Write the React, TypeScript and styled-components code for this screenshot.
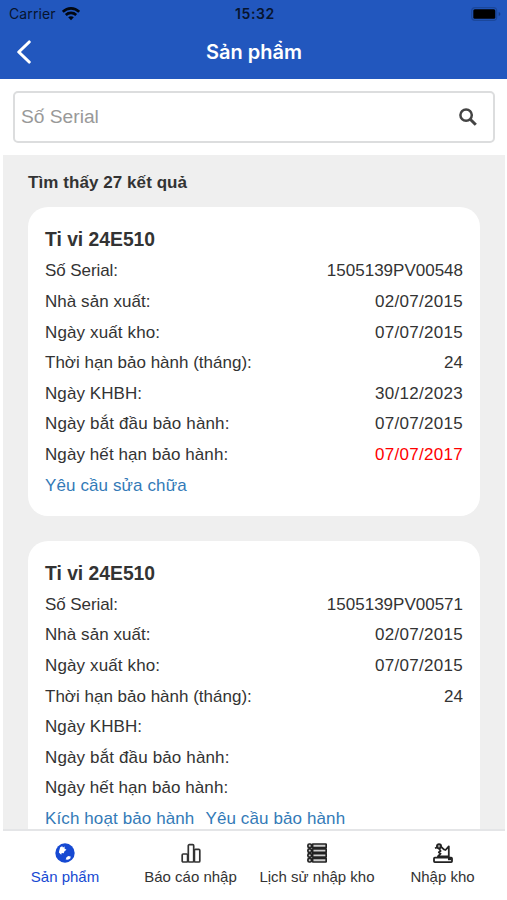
import React from "react";
import styled, { createGlobalStyle } from "styled-components";

const GlobalStyle = createGlobalStyle`
  * { box-sizing: border-box; }
  body {
    margin: 0;
    background: #fff;
    color: #333;
    font-family: "Liberation Sans", Arial, sans-serif;
  }
`;

const Screen = styled.div`
  width: 507px;
  height: 900px;
  display: flex;
  flex-direction: column;
  overflow: hidden;
  background: #fff;
`;

const Header = styled.header`
  height: 79px;
  flex: none;
  background: #2257be;
  font-family: Inter, sans-serif;
`;

const StatusBar = styled.div`
  height: 27px;
  display: grid;
  grid-template-columns: 1fr auto 1fr;
  align-items: center;
  padding: 0 6px 0 9px;
  color: #07142e;
`;

const Carrier = styled.div`
  display: flex;
  align-items: center;
  gap: 6px;
  font-size: 14px;
  letter-spacing: 0.1px;
`;

const Clock = styled.div`
  font-size: 14px;
  font-weight: 600;
  letter-spacing: 0.6px;
`;

const BatterySlot = styled.div`
  display: flex;
  justify-content: flex-end;
`;

const NavBar = styled.div`
  height: 50px;
  display: grid;
  grid-template-columns: 48px 1fr 48px;
  align-items: center;
`;

const BackButton = styled.button`
  display: flex;
  border: 0;
  padding: 0 0 0 16px;
  background: none;
`;

const NavTitle = styled.h1`
  margin: 0;
  padding-left: 1px;
  text-align: center;
  color: #fff;
  font-size: 20px;
  line-height: 50px;
  font-weight: 600;
`;

const SearchArea = styled.div`
  flex: none;
  height: 76px;
  padding: 12px 12px 0 13px;
`;

const SearchBox = styled.label`
  height: 51.5px;
  display: flex;
  align-items: center;
  justify-content: space-between;
  padding: 0 16px 0 6px;
  border: 2px solid #dcddde;
  border-radius: 5px;
`;

const SearchInput = styled.input`
  flex: 1;
  border: 0;
  padding: 0;
  outline: 0;
  background: none;
  font: 19.2px "Liberation Sans", Arial, sans-serif;
  &::placeholder { color: #999; opacity: 1; }
`;

const Results = styled.main`
  flex: 1;
  min-height: 0;
  overflow: hidden;
  margin: 0 2px 0 3px;
  padding: 12px 25px 0;
  background: #efefef;
`;

const ResultCount = styled.div`
  height: 40px;
  line-height: 31px;
  font-size: 17px;
  font-weight: 700;
  letter-spacing: 0.07px;
`;

const Card = styled.section`
  height: 309px;
  margin-bottom: 24.5px;
  padding: 17px 17px 0;
  border-radius: 20px;
  background: #fff;
`;

const CardTitle = styled.h2`
  margin: 0 0 1.4px;
  font-size: 19.3px;
  line-height: 31px;
  font-weight: 700;
`;

const Row = styled.div`
  display: flex;
  justify-content: space-between;
  font-size: 17px;
  line-height: 30.6px;
`;

const Label = styled.span<{ $spacing: number }>`
  letter-spacing: ${(p) => p.$spacing}px;
`;

const Value = styled.span<{ $date?: boolean; $expired?: boolean }>`
  letter-spacing: ${(p) => (p.$date ? "0.3px" : "0")};
  color: ${(p) => (p.$expired ? "#ff0000" : "inherit")};
`;

const Actions = styled.div`
  display: flex;
  gap: 11px;
  font-size: 17px;
  line-height: 30.6px;
`;

const Action = styled.a`
  color: #337ab7;
  letter-spacing: 0.11px;
`;

const TabBar = styled.nav`
  flex: none;
  height: 71px;
  margin: 0 2px 0 3px;
  display: grid;
  grid-template-columns: 124px 127px 126px 1fr;
  border-top: 2px solid #e4e5e7;
`;

const Tab = styled.a<{ $active?: boolean }>`
  display: flex;
  flex-direction: column;
  align-items: center;
  padding-top: 12px;
  gap: 3px;
  white-space: nowrap;
  font-size: 15px;
  line-height: 22px;
  color: ${(p) => (p.$active ? "#1649d2" : "#333")};
  svg { flex: none; }
`;

const fields = [
  { label: "Số Serial:", spacing: -0.08 },
  { label: "Nhà sản xuất:", spacing: 0.05 },
  { label: "Ngày xuất kho:", spacing: 0.13 },
  { label: "Thời hạn bảo hành (tháng):", spacing: 0 },
  { label: "Ngày KHBH:", spacing: 0.08 },
  { label: "Ngày bắt đầu bảo hành:", spacing: 0.14 },
  { label: "Ngày hết hạn bảo hành:", spacing: 0.08 },
];

const products = [
  {
    name: "Ti vi 24E510",
    values: ["1505139PV00548", "02/07/2015", "07/07/2015", "24", "30/12/2023", "07/07/2015", "07/07/2017"],
    expired: true,
    actions: ["Yêu cầu sửa chữa"],
  },
  {
    name: "Ti vi 24E510",
    values: ["1505139PV00571", "02/07/2015", "07/07/2015", "24"],
    expired: false,
    actions: ["Kích hoạt bảo hành", "Yêu cầu bảo hành"],
  },
];

const WifiIcon = () => (
  <svg width="18" height="14" viewBox="0 0 18 14" fill="none" stroke="#020711" strokeWidth="2.6">
    <path d="M.8 4.9C5.4.2 12.6.2 17.2 4.9" />
    <path d="M3.8 8c2.9-2.8 7.5-2.8 10.4 0" />
    <path d="M6.2 10.3c1.6-1.4 4-1.4 5.6 0L9 13.2z" fill="#020711" stroke="none" />
  </svg>
);

const BatteryIcon = () => (
  <svg width="30" height="14" viewBox="0 0 30 14">
    <rect x=".7" y=".7" width="25" height="12.6" rx="3.4" fill="none" stroke="#1b479b" strokeWidth="1.2" />
    <rect x="2.3" y="2.3" width="22" height="9.4" rx="1.5" fill="#000" />
    <path d="M27.7 5v4q1.7-.5 1.7-2t-1.7-2" fill="#173d87" />
  </svg>
);

const BackIcon = () => (
  <svg width="16" height="24" viewBox="0 0 16 24" fill="none" stroke="#fff" strokeWidth="3.1" strokeLinecap="round" strokeLinejoin="round">
    <path d="M13.2 2 2.8 12l10.4 10" />
  </svg>
);

const SearchIcon = () => (
  <svg width="18" height="18" viewBox="0 0 18 18" fill="none" stroke="#444" strokeWidth="2.5">
    <circle cx="7.1" cy="7.1" r="5.7" />
    <path d="m11.2 11.2 5.6 5.6" strokeWidth="3" />
  </svg>
);

const GlobeIcon = () => (
  <svg width="20" height="20" viewBox="0 0 20 20">
    <circle cx="10" cy="10" r="9.7" fill="#1649d2" />
    <path d="m5.2 4.2 2-1 .8 1.2 1.7-.8-.2 2 2 1.2-2 1.5-.8 2-2-.4-.5 1.8-2.3-2.1.4-2z" fill="#fff" />
    <path d="m11.5 14.2 1.8-1.1 2.4.4-.4 2-2.3 1.2-2.3-.3z" fill="#fff" />
  </svg>
);

const ChartIcon = () => (
  <svg width="20" height="20" viewBox="0 0 20 20" fill="#fff" stroke="#333" strokeWidth="1.7">
    <rect x="1.2" y="11" width="5.4" height="8" rx="1" />
    <rect x="7.3" y="1.7" width="5.4" height="17.3" rx="1" />
    <rect x="13.4" y="6.4" width="5.4" height="12.6" rx="1" />
  </svg>
);

const ListIcon = () => (
  <svg width="20" height="20" viewBox="0 0 20 20" fill="#ccc" stroke="#222" strokeWidth="1.7">
    {[1, 5.8, 10.6, 15.4].map((y) => (
      <React.Fragment key={y}>
        <rect x=".9" y={y} width="3.6" height="3.6" rx="1.4" />
        <rect x="5.6" y={y} width="13.6" height="3.6" rx=".4" />
      </React.Fragment>
    ))}
  </svg>
);

const StockIcon = () => (
  <svg width="20" height="20" viewBox="0 0 20 20" fill="none" stroke="#222" strokeWidth="1.8" strokeLinejoin="round">
    <circle cx="6" cy="3.2" r="2.1" fill="#999" />
    <path d="m4.2 4.3-2.2 1M8 3.7l2.8 2.7 1.7.6 3.3-3.6v10.8M5.8 5.3 7.6 8l-1.8 1.2 1.8 1.5-2.7 2.7h10.5" />
    <rect x="1" y="14.6" width="18" height="4.5" rx=".8" />
    <path d="M15 16.1h3.4" strokeWidth="2.2" />
  </svg>
);

const tabs = [
  { label: "Sản phẩm", icon: <GlobeIcon />, active: true },
  { label: "Báo cáo nhập", icon: <ChartIcon /> },
  { label: "Lịch sử nhập kho", icon: <ListIcon /> },
  { label: "Nhập kho", icon: <StockIcon /> },
];

export default function App() {
  return (
    <>
      <GlobalStyle />
      <Screen>
        <Header>
          <StatusBar>
            <Carrier>
              Carrier
              <WifiIcon />
            </Carrier>
            <Clock>15:32</Clock>
            <BatterySlot>
              <BatteryIcon />
            </BatterySlot>
          </StatusBar>
          <NavBar>
            <BackButton>
              <BackIcon />
            </BackButton>
            <NavTitle>Sản phẩm</NavTitle>
          </NavBar>
        </Header>
        <SearchArea>
          <SearchBox>
            <SearchInput placeholder="Số Serial" />
            <SearchIcon />
          </SearchBox>
        </SearchArea>
        <Results>
          <ResultCount>Tìm thấy 27 kết quả</ResultCount>
          {products.map((product, index) => (
            <Card key={index}>
              <CardTitle>{product.name}</CardTitle>
              {fields.map((field, i) => {
                const value = product.values[i] ?? "";
                return (
                  <Row key={field.label}>
                    <Label $spacing={field.spacing}>{field.label}</Label>
                    <Value $date={value.includes("/")} $expired={product.expired && i === 6}>
                      {value}
                    </Value>
                  </Row>
                );
              })}
              <Actions>
                {product.actions.map((action) => (
                  <Action key={action}>{action}</Action>
                ))}
              </Actions>
            </Card>
          ))}
        </Results>
        <TabBar>
          {tabs.map((tab) => (
            <Tab key={tab.label} $active={tab.active}>
              {tab.icon}
              <span>{tab.label}</span>
            </Tab>
          ))}
        </TabBar>
      </Screen>
    </>
  );
}
